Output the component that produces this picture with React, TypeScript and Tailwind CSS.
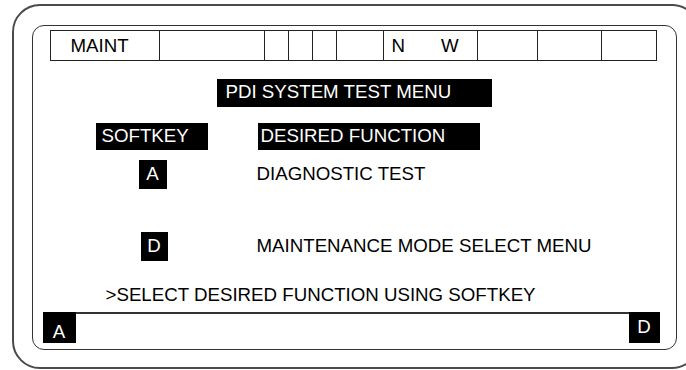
import React from "react";

const font = { fontFamily: '"Liberation Sans", Arial, sans-serif' };

export default function App() {
  const cells = [109, 105, 24, 24, 24, 47, 94, 60, 64, 54];
  return (
    <div
      className="w-[686px] h-[370px] overflow-hidden bg-white text-[18.7px] text-black"
      style={font}
    >
      <div className="ml-[12px] mt-[4px] w-[688px] h-[365px] border-2 border-[#4a4a4a] rounded-[28px] box-border">
        <div className="ml-[18px] mt-[19px] w-[645px] h-[325px] border-[1.5px] border-[#333] rounded-[12px] box-border flex flex-col items-start">
          {/* status bar */}
          <div className="mt-[3.5px] ml-[16.5px] w-[607px] h-[31px] border border-[#222] box-border flex">
            {cells.map((w, i) => (
              <div
                key={i}
                className={
                  "h-full box-border flex items-center leading-none " +
                  (i < cells.length - 1 ? "border-r border-[#222]" : "")
                }
                style={{ width: w }}
              >
                {i === 0 && <span className="pl-[20px] pt-[2px]">MAINT</span>}
                {i === 6 && (
                  <span className="pl-[8px] pt-[2px] flex">
                    <span>N</span>
                    <span className="ml-[36px]">W</span>
                  </span>
                )}
              </div>
            ))}
          </div>

          {/* title */}
          <div className="mt-[18px] ml-[183.5px] w-[275px] h-[28px] bg-black text-white flex items-center pl-[9px] leading-none">
            PDI SYSTEM TEST MENU
          </div>

          {/* header row */}
          <div className="mt-[16px] flex">
            <div className="ml-[62.5px] w-[112px] h-[27px] bg-black text-white flex items-center pl-[6px] leading-none">
              SOFTKEY
            </div>
            <div className="ml-[50px] w-[222px] h-[27px] bg-black text-white flex items-center pl-[3px] leading-none">
              DESIRED FUNCTION
            </div>
          </div>

          {/* A row */}
          <div className="mt-[10px] flex items-center">
            <div className="ml-[105.5px] w-[28px] h-[29px] bg-black text-white flex items-center justify-center leading-none">
              A
            </div>
            <div className="ml-[90px] leading-none">DIAGNOSTIC TEST</div>
          </div>

          {/* D row */}
          <div className="mt-[43px] flex items-center">
            <div className="ml-[107.5px] w-[27px] h-[29px] bg-black text-white flex items-center justify-center leading-none">
              D
            </div>
            <div className="ml-[89px] leading-none">MAINTENANCE MODE SELECT MENU</div>
          </div>

          {/* prompt */}
          <div className="mt-[24px] ml-[72.5px] h-[20px] leading-[20px]">
            &gt;SELECT DESIRED FUNCTION USING SOFTKEY
          </div>

          {/* softkey bar */}
          <div className="mt-[7px] ml-[9.5px] w-[617px] h-[31px] border-t-2 border-[#333] box-border flex justify-between">
            <div className="-mt-[2px] w-[33px] h-[31px] bg-black text-white flex items-center justify-center pt-[10px] leading-none">
              A
            </div>
            <div className="-mt-[2px] w-[31px] h-[31px] bg-black text-white flex items-center justify-center leading-none">
              D
            </div>
          </div>
        </div>
      </div>
    </div>
  );
}
